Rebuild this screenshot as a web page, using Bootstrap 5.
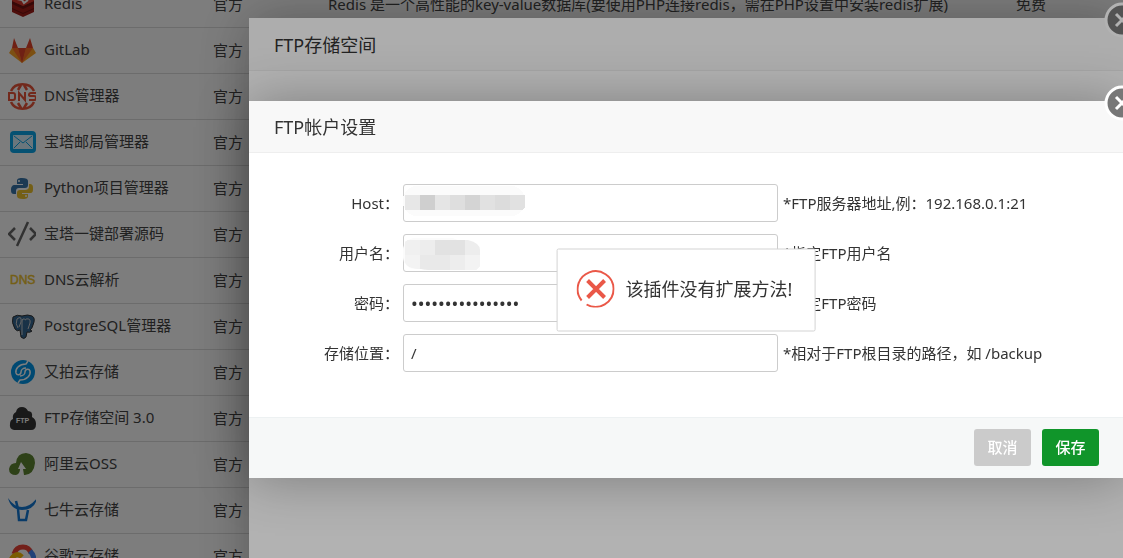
<!DOCTYPE html>
<html lang="zh-CN">
<head>
<meta charset="utf-8">
<meta name="viewport" content="width=device-width, initial-scale=1">
<title>FTP帐户设置</title>
<link href="https://cdn.jsdelivr.net/npm/bootstrap@5.3.0/dist/css/bootstrap.min.css" rel="stylesheet">
<style>
body{font-family:"Noto Sans","Noto Sans CJK SC",sans-serif;font-size:15px;line-height:22px;color:#333;background:#fff}
.app-page{height:100vh;overflow:hidden}
/* the plugin list is scrolled so that its first row is partly out of view */
.plugin-table{table-layout:fixed;margin:-19px 0 0;color:#444;--bs-table-color:#444}
.plugin-table td{height:46px;padding:0 8px;border-color:#ddd;vertical-align:middle;white-space:nowrap}
.plugin-table svg{width:28px;height:28px;flex:none}
.plugin-name{gap:8px;height:45px;padding-bottom:2px}
.plugin-name svg{position:relative;top:2px}
.col-name{width:205px}.col-vendor{width:115px}.col-price{width:115px}
.shade-layer{background:rgba(0,0,0,.3);overflow:hidden}
.dialog-box{position:relative;margin-left:249px;background:#fff;box-shadow:1px 1px 50px rgba(0,0,0,.3)}
.dialog-tall{margin-top:18px;min-height:650px}
.dialog-form{margin-top:101px}
.dialog-title{font-size:18px;line-height:50px;font-weight:400;margin:0;padding:1px 25px 0;background:#f8f8f8;border-bottom:1px solid #eee;color:#333}
.dialog-tall .dialog-title{padding-top:2px}
.dialog-close{position:absolute;top:-16px;right:-17px;width:36px;height:36px;padding:0;border:0;background:none;display:flex}
.form-area{padding:31px 25px 45px 25px;gap:12px}
.form-area label{width:125px;text-align:right;flex:none}
.field-wrap{position:relative;flex:0 1 375px;margin:0 5px 0 4px}
.field-wrap .form-control{height:38px;padding:0 7px;border:1px solid #ccc;border-radius:3px;font-size:15px;color:#333}
.field-wrap .pass-input{font-size:18px}
.mosaic{position:absolute;left:0;top:0}
.field-help{white-space:nowrap}
.dialog-foot{padding:11px 24px 12px;gap:11px;background:#f6f8f8;border-top:1px solid #edf1f2}
.dialog-foot .btn{width:57px;height:37px;padding:0;font-size:15px;font-weight:500;border-radius:3px;color:#fff}
.btn-cancel{background:#cbcbcb}.btn-cancel:hover{background:#bbb}
.btn-save{background:#10952a}.btn-save:hover{background:#0b7d21}
.msg-box{height:83px;padding:0 22px 2px 19px;gap:11px;background:#fff;border:1px solid #d3d3d3;border-radius:2px;font-size:18px;white-space:nowrap}
</style>
</head>
<body>
<main class="app-page">
<table class="table plugin-table">
<colgroup><col class="col-name"><col class="col-vendor"><col><col class="col-price"></colgroup>
<tbody>
<tr><td><div class="plugin-name d-flex align-items-center">
<svg viewBox="0 0 28 28"><path d="M4 5 15 1l11 4v16l-11 5-11-5z" fill="#a11d18"/><path d="M4 10l11 5 11-5v3l-11 5-11-5zM4 17l11 5 11-5v1l-11 5-11-5z" fill="#6f1411"/><path d="M4 5l11-4 11 4v5l-11 5-11-5z" fill="#d5362c"/><path d="M9 8l5 1 2 3 4-3" fill="none" stroke="#fff" stroke-width="2"/></svg>
<span>Redis</span></div></td><td>官方</td><td>Redis 是一个高性能的key-value数据库(要使用PHP连接redis，需在PHP设置中安装redis扩展)</td><td>免费</td></tr>
<tr><td><div class="plugin-name d-flex align-items-center">
<svg viewBox="0 0 28 28"><path d="M1 16 4 11h21l3 5-14 10z" fill="#fca326"/><path d="M4 11 6 1l4 10zM18 11l4-10 3 10z" fill="#e24329"/><path d="M4 11h6l4 15zM25 11h-7l-4 15z" fill="#fc6d26"/><path d="M10 11h8l-4 15z" fill="#e24329"/></svg>
<span>GitLab</span></div></td><td>官方</td><td></td><td></td></tr>
<tr><td><div class="plugin-name d-flex align-items-center">
<svg viewBox="0 0 28 28" fill="none" stroke="#e8553a"><path d="M3 8C7-1 22-1 26 8M3 19c4 9 19 9 23 0M10 7l3-5M19 7l-3-5M10 20l3 5M19 20l-3 5" stroke-width="2.500"/><path d="M1 10h4q2 0 2 2v3q0 2-2 2H1zM11 18v-8l6 7V9M28 10h-5q-2 0-2 2 0 1 2 1h3q2 0 2 2t-2 2h-5" stroke-width="2"/></svg>
<span>DNS管理器</span></div></td><td>官方</td><td></td><td></td></tr>
<tr><td><div class="plugin-name d-flex align-items-center">
<svg viewBox="0 0 28 28"><rect x="2" y="2" width="26" height="22" rx="4" fill="#0ba5e8"/><rect x="5" y="6" width="20" height="14" rx="1" fill="#d8f1fc"/><path d="M6 7l9 7 9-7M6 19l6-6M24 19l-6-6" fill="none" stroke="#0ba5e8"/></svg>
<span>宝塔邮局管理器</span></div></td><td>官方</td><td></td><td></td></tr>
<tr><td><div class="plugin-name d-flex align-items-center">
<svg viewBox="0 0 28 28"><path d="M14 3c-4 0-5 1-5 3v3h6v1H7c-3 0-4 2-4 5s1 4 3 4h2v-3c0-2 1-3 3-3h6c2 0 3-1 3-3V6c0-2-2-3-6-3z" fill="#3775a9"/><path d="M15 24c4 0 5-1 5-3v-2h-6v-1h8c3 0 3-2 3-5s-1-4-3-4h-1v3c0 2-2 3-4 3h-5c-2 0-3 1-3 3v3c0 2 2 3 6 3z" fill="#ecc22e"/><circle cx="11" cy="6" r="1" fill="#fff"/><circle cx="18" cy="21" r="1" fill="#fff"/></svg>
<span>Python项目管理器</span></div></td><td>官方</td><td></td><td></td></tr>
<tr><td><div class="plugin-name d-flex align-items-center">
<svg viewBox="0 0 28 28" fill="none" stroke="#666" stroke-width="2.500"><path d="M7 7l-6 6 6 6M22 7l6 6-6 6M20 1 9 25"/></svg>
<span>宝塔一键部署源码</span></div></td><td>官方</td><td></td><td></td></tr>
<tr><td><div class="plugin-name d-flex align-items-center">
<svg viewBox="0 0 28 28"><text x="2" y="17" font-family="Liberation Sans,sans-serif" font-size="12" fill="#ecc22e" stroke="#ecc22e" stroke-width=".5">DNS</text></svg>
<span>DNS云解析</span></div></td><td>官方</td><td></td><td></td></tr>
<tr><td><div class="plugin-name d-flex align-items-center">
<svg viewBox="0 0 28 28"><path d="M5 4q4-3 9-1 6-2 10 0 4 2 1 9-1 4-3 5l2 1q-2 2-5 1l-1 5q-2 3-5 0l-1-7q-3 2-5-1Q3 9 5 4z" fill="#336791" stroke="#333" stroke-width="1"/><path d="M9 6q5-4 4 3l-2 5M18 7q-4-3-4 2v13M18 6q5-1 4 4l-2 6M9 6q-2 5 1 9" fill="none" stroke="#ccc" stroke-width="1"/></svg>
<span>PostgreSQL管理器</span></div></td><td>官方</td><td></td><td></td></tr>
<tr><td><div class="plugin-name d-flex align-items-center">
<svg viewBox="0 0 28 28"><circle cx="15" cy="13" r="12" fill="#0096e8"/><path d="M20 2l-2 3c-7 0-11 5-10 9 1 3 5 2 5-1 0-2 2-4 5-4M10 24l2-3c7 0 11-5 10-9-1-3-5-2-5 1 0 2-2 4-5 4" fill="none" stroke="#fff" stroke-width="1.500"/></svg>
<span>又拍云存储</span></div></td><td>官方</td><td></td><td></td></tr>
<tr><td><div class="plugin-name d-flex align-items-center">
<svg viewBox="0 0 28 28"><path d="M6 25q-5-1-4-6 0-4 3-5-1-5 3-7 1-5 6-5 4 0 6 4 5 0 4 6 4 2 4 7 0 6-5 6z" fill="#333"/><text x="8" y="18" font-family="Liberation Sans,sans-serif" font-size="7" font-weight="700" fill="#fff">FTP</text></svg>
<span>FTP存储空间 3.0</span></div></td><td>官方</td><td></td><td></td></tr>
<tr><td><div class="plugin-name d-flex align-items-center">
<svg viewBox="0 0 28 28"><path d="M8 24q-7 0-7-6 1-6 7-6 1-10 10-10 9 1 9 10-1 11-10 12h-1l-1-6h3l-5-7-3 7h2q0 5-4 6z" fill="#5f8532"/></svg>
<span>阿里云OSS</span></div></td><td>官方</td><td></td><td></td></tr>
<tr><td><div class="plugin-name d-flex align-items-center">
<svg viewBox="0 0 28 28" fill="#1478d4"><path d="M0 1q6 9 14 9t15-9q-2 12-15 12Q3 13 0 1z"/><path d="M8 4l2 8 1 11h7l2-10" fill="none" stroke="#1478d4" stroke-width="2.500"/></svg>
<span>七牛云存储</span></div></td><td>官方</td><td></td><td></td></tr>
<tr><td><div class="plugin-name d-flex align-items-center">
<svg viewBox="0 0 28 28" fill="none" stroke-width="5"><path d="M6 11Q8 4 15 4q6 0 8 6" stroke="#ea4335"/><path d="M22 8q4 4 4 9t-4 6h-7" stroke="#4285f4"/><path d="M14 14q-4-4-8-1-6 5 0 10" stroke="#fbbc05"/><path d="M6 23h9" stroke="#34a853"/></svg>
<span>谷歌云存储</span></div></td><td>官方</td><td></td><td></td></tr>
</tbody>
</table>
</main>

<div class="shade-layer position-fixed top-0 start-0 w-100 h-100">
<section class="dialog-box dialog-tall">
<h2 class="dialog-title">FTP存储空间</h2>
<button type="button" class="dialog-close" aria-label="关闭"><svg width="36" height="36" viewBox="0 0 36 36"><circle cx="18" cy="18" r="16" fill="#777" stroke="#fff" stroke-width="3"/><path d="M12 12l12 12M24 12 12 24" stroke="#fff" stroke-width="3"/></svg></button>
</section>
</div>

<div class="shade-layer position-fixed top-0 start-0 w-100 h-100">
<section class="dialog-box dialog-form" role="dialog" aria-labelledby="dlg-title">
<h2 class="dialog-title" id="dlg-title">FTP帐户设置</h2>
<button type="button" class="dialog-close" aria-label="关闭"><svg width="36" height="36" viewBox="0 0 36 36"><circle cx="18" cy="18" r="16" fill="#777" stroke="#fff" stroke-width="3"/><path d="M12 12l12 12M24 12 12 24" stroke="#fff" stroke-width="3"/></svg></button>
<form>
<div class="form-area d-flex flex-column">
<div class="d-flex align-items-center"><label for="f-host">Host：</label>
<div class="field-wrap"><input id="f-host" type="text" class="form-control">
<svg class="mosaic" width="123" height="34" viewBox="0 0 123 34" shape-rendering="crispEdges"><rect y="2" width="122" height="30" rx="14" fill="#fbfbfb"/><path d="M2 11h15v15H2z" fill="#e7e7e7"/><path d="M17 11h15v15H17z" fill="#cfcfcf"/><path d="M32 11h15v15H32z" fill="#e5e5e5"/><path d="M47 11h15v15H47z" fill="#dedede"/><path d="M62 11h15v15H62z" fill="#d4d4d4"/><path d="M77 11h15v15H77z" fill="#e1e1e1"/><path d="M92 11h15v15H92z" fill="#dcdcdc"/><path d="M107 11h15v12l-3 3h-12z" fill="#e1e1e1"/></svg></div>
<span class="field-help">*FTP服务器地址,例：192.168.0.1:21</span></div>
<div class="d-flex align-items-center"><label for="f-user">用户名：</label>
<div class="field-wrap"><input id="f-user" type="text" class="form-control">
<svg class="mosaic" width="78" height="38" viewBox="0 0 78 38"><defs><clipPath id="blot"><path d="M2 8l3-2h60q12 3 12 10v16l-4 4H26L10 34q-8-2-8-8z"/></clipPath></defs><rect y="4" width="60" height="31" rx="12" fill="#fbfbfb"/><g clip-path="url(#blot)" shape-rendering="crispEdges"><path d="M2 6h75v30H2z" fill="#ededed"/><path d="M2 6h15v15H2z" fill="#f0f0f0"/><path d="M32 6h30v15H32z" fill="#e2e2e2"/><path d="M17 21h30v15H17z" fill="#e9e9e9"/><path d="M2 21h15v15H2zM62 21h15v15H62z" fill="#f3f3f3"/></g></svg></div>
<span class="field-help">*指定FTP用户名</span></div>
<div class="d-flex align-items-center"><label for="f-pass">密码：</label>
<div class="field-wrap"><input id="f-pass" type="password" class="form-control pass-input" value="abcdefghijklmnop"></div>
<span class="field-help">*指定FTP密码</span></div>
<div class="d-flex align-items-center"><label for="f-path">存储位置：</label>
<div class="field-wrap"><input id="f-path" type="text" class="form-control" value="/"></div>
<span class="field-help">*相对于FTP根目录的路径，如 /backup</span></div>
</div>
<div class="dialog-foot d-flex justify-content-end">
<button type="button" class="btn btn-cancel">取消</button>
<button type="button" class="btn btn-save">保存</button>
</div>
</form>
<div class="msg-box position-absolute top-50 start-50 translate-middle d-flex align-items-center" role="alert">
<svg width="38" height="38" viewBox="0 0 38 38" fill="none" stroke="#ea5848"><path d="M10 35A18 18 0 0 0 37 19 18 18 0 1 0 5 31" stroke-width="2"/><path d="M11 11l17 17M28 11 11 28" stroke-width="4"/></svg>
<span>该插件没有扩展方法!</span>
</div>
</section>
</div>
<script src="https://cdn.jsdelivr.net/npm/bootstrap@5.3.0/dist/js/bootstrap.bundle.min.js"></script>
</body>
</html>
